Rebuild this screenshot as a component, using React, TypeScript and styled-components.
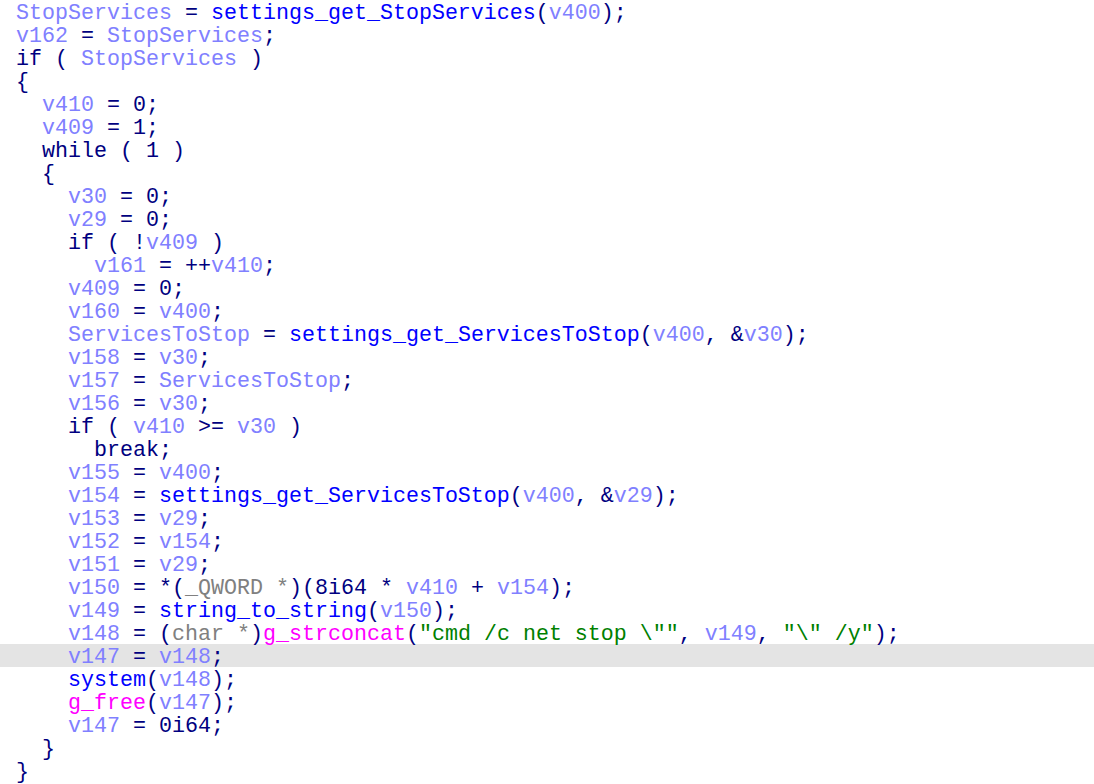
import React from "react";
import styled, { createGlobalStyle } from "styled-components";

const Global = createGlobalStyle`
  html, body { margin: 0; padding: 0; background: #ffffff; }
  body { width: 1094px; height: 784px; overflow: hidden; }
`;

type Kind = "v" | "f" | "k" | "s" | "i" | "t";

const colors: Record<Kind, string> = {
  v: "#8080ff",
  f: "#0000ff",
  k: "#000080",
  s: "#008000",
  i: "#ff00ff",
  t: "#808080",
};

const Editor = styled.div`
  display: flex;
  flex-direction: column;
  width: 1094px;
  height: 784px;
  background: #ffffff;
  font-family: "Liberation Mono", "Courier New", monospace;
  font-size: 21.67px;
  color: #000080;
`;

const Line = styled.div<{ $active?: boolean }>`
  box-sizing: border-box;
  height: 23px;
  flex: none;
  padding: 5px 0 0 16px;
  line-height: 17px;
  white-space: pre;
  background: ${(p) => (p.$active ? "#e4e4e4" : "transparent")};
`;

const Tok = styled.span<{ $k: Kind }>`
  position: relative;
  color: ${(p) => colors[p.$k]};
`;

type Seg = [Kind, string];
const v = (s: string): Seg => ["v", s];
const f = (s: string): Seg => ["f", s];
const k = (s: string): Seg => ["k", s];
const s = (x: string): Seg => ["s", x];
const i = (x: string): Seg => ["i", x];
const t = (x: string): Seg => ["t", x];

const assign = (ind: string, a: string, b: Seg[]): Seg[] => [k(ind), v(a), k(" = "), ...b, k(";")];

const lines: Seg[][] = [
  assign("", "StopServices", [f("settings_get_StopServices"), k("("), v("v400"), k(")")]),
  assign("", "v162", [v("StopServices")]),
  [k("if ( "), v("StopServices"), k(" )")],
  [k("{")],
  assign("  ", "v410", [k("0")]),
  assign("  ", "v409", [k("1")]),
  [k("  while ( 1 )")],
  [k("  {")],
  assign("    ", "v30", [k("0")]),
  assign("    ", "v29", [k("0")]),
  [k("    if ( !"), v("v409"), k(" )")],
  assign("      ", "v161", [k("++"), v("v410")]),
  assign("    ", "v409", [k("0")]),
  assign("    ", "v160", [v("v400")]),
  assign("    ", "ServicesToStop", [
    f("settings_get_ServicesToStop"),
    k("("),
    v("v400"),
    k(", &"),
    v("v30"),
    k(")"),
  ]),
  assign("    ", "v158", [v("v30")]),
  assign("    ", "v157", [v("ServicesToStop")]),
  assign("    ", "v156", [v("v30")]),
  [k("    if ( "), v("v410"), k(" >= "), v("v30"), k(" )")],
  [k("      break;")],
  assign("    ", "v155", [v("v400")]),
  assign("    ", "v154", [
    f("settings_get_ServicesToStop"),
    k("("),
    v("v400"),
    k(", &"),
    v("v29"),
    k(")"),
  ]),
  assign("    ", "v153", [v("v29")]),
  assign("    ", "v152", [v("v154")]),
  assign("    ", "v151", [v("v29")]),
  assign("    ", "v150", [
    k("*("),
    t("_QWORD *"),
    k(")(8i64 * "),
    v("v410"),
    k(" + "),
    v("v154"),
    k(")"),
  ]),
  assign("    ", "v149", [f("string_to_string"), k("("), v("v150"), k(")")]),
  assign("    ", "v148", [
    k("("),
    t("char *"),
    k(")"),
    i("g_strconcat"),
    k("("),
    s('"cmd /c net stop \\""'),
    k(", "),
    v("v149"),
    k(", "),
    s('"\\" /y"'),
    k(")"),
  ]),
  assign("    ", "v147", [v("v148")]),
  [k("    "), f("system"), k("("), v("v148"), k(");")],
  [k("    "), i("g_free"), k("("), v("v147"), k(");")],
  assign("    ", "v147", [k("0i64")]),
  [k("  }")],
  [k("}")],
];

export default function App() {
  return (
    <>
      <Global />
      <Editor>
        {lines.map((segs, li) => (
          <Line key={li} $active={li === 28}>
            {segs.map(([kind, text], si) => (
              <Tok key={si} $k={kind}>
                {text}
              </Tok>
            ))}
          </Line>
        ))}
      </Editor>
    </>
  );
}
